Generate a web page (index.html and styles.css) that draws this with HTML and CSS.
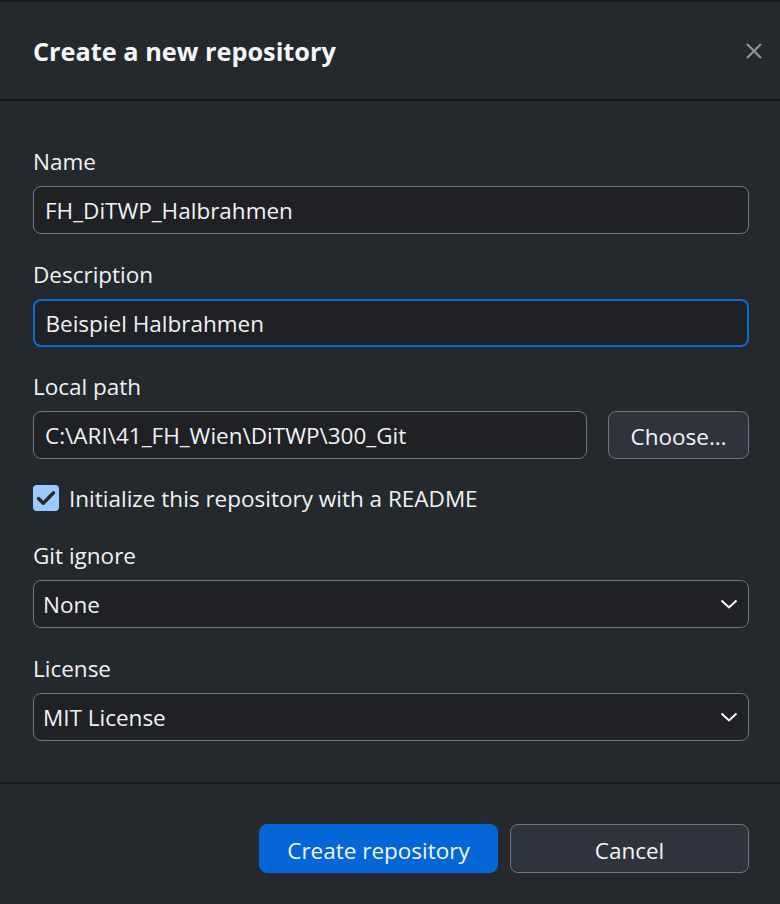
FILE: index.html
```html
<!DOCTYPE html>
<html lang="en">
<head>
<meta charset="utf-8">
<title>Create a new repository</title>
<link rel="stylesheet" href="styles.css">
</head>
<body>
<div class="dialog">
  <header class="dialog-header">
    <h1 class="title">Create a new repository</h1>
    <button class="close" aria-label="Close">
      <svg width="18" height="18" viewBox="0 0 18 18"><path d="M2 2 L16 16 M16 2 L2 16" stroke="currentColor" stroke-width="2.2" fill="none"/></svg>
    </button>
  </header>
  <main class="dialog-body">
    <div class="field f-name">
      <div class="label">Name</div>
      <div class="input">FH_DiTWP_Halbrahmen</div>
    </div>
    <div class="field f-desc">
      <div class="label">Description</div>
      <div class="input focused">Beispiel Halbrahmen</div>
    </div>
    <div class="field f-path">
      <div class="label">Local path</div>
      <div class="path-row">
        <div class="input grow">C:\ARI\41_FH_Wien\DiTWP\300_Git</div>
        <button class="btn secondary choose">Choose…</button>
      </div>
    </div>
    <div class="check-row">
      <span class="checkbox">
        <svg width="20" height="18" viewBox="0 0 20 18"><path d="M2.5 9.5 L7.3 14.3 L17.5 3.8" stroke="#25292e" stroke-width="3.4" fill="none" stroke-linecap="round" stroke-linejoin="round"/></svg>
      </span>
      <span class="check-label">Initialize this repository with a README</span>
    </div>
    <div class="field f-ignore">
      <div class="label">Git ignore</div>
      <div class="input select"><span>None</span>
        <svg class="chev" width="18" height="10" viewBox="0 0 18 10"><path d="M1.5 1.5 L9 8.5 L16.5 1.5" stroke="#ffffff" stroke-width="2" fill="none"/></svg>
      </div>
    </div>
    <div class="field f-license">
      <div class="label">License</div>
      <div class="input select"><span>MIT License</span>
        <svg class="chev" width="18" height="10" viewBox="0 0 18 10"><path d="M1.5 1.5 L9 8.5 L16.5 1.5" stroke="#ffffff" stroke-width="2" fill="none"/></svg>
      </div>
    </div>
  </main>
  <footer class="dialog-footer">
    <button class="btn primary">Create repository</button>
    <button class="btn secondary">Cancel</button>
  </footer>
</div>
</body>
</html>
```

FILE: styles.css
```css
* { box-sizing: border-box; }
html, body { margin: 0; padding: 0; }
body {
  background: #24292e;
  font-family: "Open Sans", "Noto Sans", sans-serif;
  color: #f0f2f4;
  width: 780px;
  height: 904px;
  overflow: hidden;
}
.dialog {
  border-top: 2px solid #17191c;
  height: 904px;
  display: flex;
  flex-direction: column;
}
.dialog-header {
  height: 99px;
  flex: none;
  border-bottom: 2px solid #141618;
  display: flex;
  align-items: center;
  justify-content: space-between;
  padding: 1px 17px 0 33px;
}
.title {
  margin: 0;
  font-size: 25.3px;
  font-weight: 700;
  color: #f6f7f8;
}
.close {
  background: none;
  border: 0;
  padding: 0;
  color: #8c949c;
  width: 18px;
  height: 18px;
  display: flex;
}
.dialog-body {
  flex: none;
  padding: 47px 31px 41px 33px;
  display: flex;
  flex-direction: column;
  border-bottom: 2px solid #141618;
}
.field { display: flex; flex-direction: column; gap: 10px; }
.f-desc { margin-top: 27px; }
.f-path { margin-top: 26px; }
.check-row { margin-top: 25px; }
.f-ignore { margin-top: 30px; }
.f-license { margin-top: 27px; }
.label {
  font-size: 22.5px;
  line-height: 28px;
  color: #f0f2f4;
}
.input {
  height: 48px;
  border: 1.5px solid #6e7681;
  border-radius: 8px;
  background: #1f2124;
  font-size: 22.5px;
  display: flex;
  align-items: center;
  padding: 1px 11px 0;
  color: #f0f2f4;
}
.input.focused {
  border: 2px solid #0b6bd6;
  padding: 1px 10.5px 0;
}
.path-row { display: flex; gap: 21px; }
.grow { flex: 1; }
.select { justify-content: space-between; padding: 1px 9px 0 9px; }
.chev { margin-right: 1px; margin-top: -1px; }
.btn {
  font-family: inherit;
  font-size: 22.5px;
  border-radius: 8px;
  height: 48px;
  color: #f4f5f6;
  display: flex;
  align-items: center;
  justify-content: center;
  padding: 3px 0 0;
}
.secondary {
  background: #2f343b;
  border: 1.5px solid #6e7681;
}
.primary {
  background: #0566d8;
  border: 1.5px solid #0566d8;
}
.choose { width: 141px; }
.check-row {
  display: flex;
  align-items: center;
  gap: 10px;
  height: 28px;
}
.checkbox {
  width: 26px;
  height: 26px;
  border-radius: 4px;
  background: #9ccaff;
  display: flex;
  align-items: center;
  justify-content: center;
}
.check-label { font-size: 22.5px; color: #f0f2f4; }
.dialog-footer {
  flex: 1;
  display: flex;
  justify-content: flex-end;
  align-items: flex-start;
  gap: 12px;
  padding: 40px 31px 0 0;
}
.dialog-footer .btn { width: 239px; height: 49px; }
```
